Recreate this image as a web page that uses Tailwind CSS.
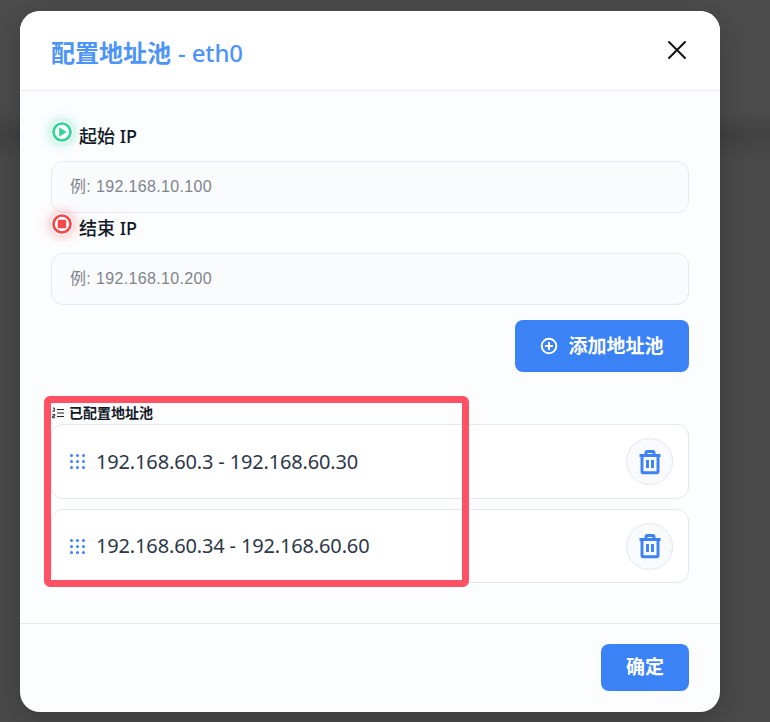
<!DOCTYPE html>
<html lang="zh">
<head>
    <meta charset="UTF-8" />
    <title>配置地址池</title>
    <script src="https://cdn.jsdelivr.net/npm/@tailwindcss/browser@4"></script>
</head>
<body class="m-0 h-[722px] w-[770px] overflow-hidden bg-[#464646] font-['Noto_Sans','Noto_Sans_CJK_SC',sans-serif]">
    <div class="relative h-[722px] w-[770px] bg-[linear-gradient(180deg,#4c4c4c_0,#4c4c4c_110px,#424242_135px,#4a4a4a_160px,#4a4a4a_100%)] pt-[11px] pl-[20px]">

        <!-- Modal -->
        <div class="flex h-[701px] w-[700px] flex-col overflow-hidden rounded-[20px] bg-[#fcfdfe] shadow-[0_8px_32px_rgba(0,0,0,0.22)]">

            <!-- Header -->
            <div class="flex h-[80px] shrink-0 items-center justify-between border-b border-[#e8eaf2] bg-white pr-[33px] pl-[31px]">
                <h2 class="pt-[4px] text-[24px] font-semibold text-[#4d94f8]">配置地址池<span class="ml-[1px] font-medium tracking-[-0.15px]"> - eth0</span></h2>
                <svg class="mb-[2px] h-[20px] w-[20px]" viewBox="0 0 20 20" fill="none" stroke="#111" stroke-width="2" stroke-linecap="round">
                    <path d="M2 2 18 18M18 2 2 18" />
                </svg>
            </div>

            <!-- Body -->
            <div class="flex flex-1 flex-col px-[31px]">
                <div class="flex h-[70px] items-start pt-[29px]">
                    <svg class="mt-[1px] h-[22px] w-[22px] rounded-full shadow-[0_0_10px_3px_rgba(52,211,153,0.3)]" viewBox="0 0 22 22">
                        <circle cx="11" cy="11" r="8.5" fill="none" stroke="#34d399" stroke-width="2.7" />
                        <path d="M8.2 6.2v9.6l7.4-4.8z" fill="#34d399" />
                    </svg>
                    <label class="mt-[4px] ml-[6px] text-[18px] leading-[24px] font-medium text-[#111827]">起始 IP</label>
                </div>
                <input class="h-[52px] w-full rounded-[12px] border border-[#e6e8f0] bg-[#fafbfd] px-[18px] font-['Liberation_Sans','Noto_Sans_CJK_SC',sans-serif] text-[16px] tracking-[0.35px] placeholder:text-[#80848c]" placeholder="例: 192.168.10.100" />

                <div class="flex h-[40px] items-start">
                    <svg class="h-[22px] w-[22px] rounded-full shadow-[0_0_10px_3px_rgba(248,113,113,0.35)]" viewBox="0 0 22 22">
                        <circle cx="11" cy="11" r="8.5" fill="none" stroke="#f24a4a" stroke-width="2.7" />
                        <rect x="6.8" y="6.8" width="8.4" height="8.4" rx="1.2" fill="#f24a4a" />
                    </svg>
                    <label class="mt-[3px] ml-[6px] text-[18px] leading-[24px] font-medium text-[#111827]">结束 IP</label>
                </div>
                <input class="h-[52px] w-full rounded-[12px] border border-[#e6e8f0] bg-[#fafbfd] px-[18px] font-['Liberation_Sans','Noto_Sans_CJK_SC',sans-serif] text-[16px] tracking-[0.35px] placeholder:text-[#80848c]" placeholder="例: 192.168.10.200" />

                <div class="mt-[15px] flex justify-end">
                    <button class="flex h-[52px] w-[174px] items-center justify-center gap-[10px] rounded-[8px] bg-[#3b82f6] text-[19px] font-semibold text-white">
                        <svg class="h-[18px] w-[18px]" viewBox="0 0 18 18" fill="none" stroke="#fff" stroke-width="2" stroke-linecap="round">
                            <circle cx="9" cy="9" r="7.3" />
                            <path d="M9 5.8v6.4M5.8 9h6.4" />
                        </svg>
                        添加地址池
                    </button>
                </div>

                <div class="mt-[31px] mb-[2px] flex h-[19px] items-center gap-[5px] pl-[1px] text-[14px] font-bold text-[#111827]">
                    <svg class="h-[12px] w-[12px]" viewBox="0 0 12 12" fill="none" stroke="#222" stroke-width="1.1">
                        <path d="M5 2.5h7M5 6h7M5 9.5h7" />
                        <path d="M1 1h1.3v3M.4 4h2.6M.6 7.5h2.2v1.6H.6v1.6h2.4" stroke-width="1" />
                    </svg>
                    已配置地址池
                </div>

                <div class="flex flex-col gap-[10px]">
                    <div class="flex h-[75px] items-center justify-between rounded-[12px] border border-[#e3e7f0] bg-white pr-[15px] pl-[18px]">
                        <div class="flex items-center gap-[11px]">
                            <svg class="h-[15px] w-[15px]" viewBox="0 0 15 15" fill="#3b82f6">
                                <circle cx="1.5" cy="1.5" r="1.5" /><circle cx="7.5" cy="1.5" r="1.5" /><circle cx="13.5" cy="1.5" r="1.5" />
                                <circle cx="1.5" cy="7.5" r="1.5" /><circle cx="7.5" cy="7.5" r="1.5" /><circle cx="13.5" cy="7.5" r="1.5" />
                                <circle cx="1.5" cy="13.5" r="1.5" /><circle cx="7.5" cy="13.5" r="1.5" /><circle cx="13.5" cy="13.5" r="1.5" />
                            </svg>
                            <span class="text-[20px] tracking-[-0.15px] text-[#2d3748]">192.168.60.3 - 192.168.60.30</span>
                        </div>
                        <button class="flex h-[47px] w-[47px] items-center justify-center rounded-full border border-[#e3e7f0] bg-[#f8fafc]">
                            <svg class="h-[26px] w-[26px]" viewBox="0 0 26 26" fill="none" stroke="#3b82f6" stroke-width="2.9" stroke-linejoin="round">
                                <path d="M2.5 6.5h21M9 6.5V3.8c0-.7.5-1.3 1.2-1.3h5.6c.7 0 1.2.6 1.2 1.3v2.7M5 6.5v16c0 .8.6 1.3 1.3 1.3h13.4c.7 0 1.3-.5 1.3-1.3v-16M10.5 11v8M15.5 11v8" />
                            </svg>
                        </button>
                    </div>
                    <div class="flex h-[74px] items-center justify-between rounded-[12px] border border-[#e3e7f0] bg-white pr-[15px] pl-[18px]">
                        <div class="flex items-center gap-[11px]">
                            <svg class="h-[15px] w-[15px]" viewBox="0 0 15 15" fill="#3b82f6">
                                <circle cx="1.5" cy="1.5" r="1.5" /><circle cx="7.5" cy="1.5" r="1.5" /><circle cx="13.5" cy="1.5" r="1.5" />
                                <circle cx="1.5" cy="7.5" r="1.5" /><circle cx="7.5" cy="7.5" r="1.5" /><circle cx="13.5" cy="7.5" r="1.5" />
                                <circle cx="1.5" cy="13.5" r="1.5" /><circle cx="7.5" cy="13.5" r="1.5" /><circle cx="13.5" cy="13.5" r="1.5" />
                            </svg>
                            <span class="text-[20px] tracking-[-0.15px] text-[#2d3748]">192.168.60.34 - 192.168.60.60</span>
                        </div>
                        <button class="flex h-[47px] w-[47px] items-center justify-center rounded-full border border-[#e3e7f0] bg-[#f8fafc]">
                            <svg class="h-[26px] w-[26px]" viewBox="0 0 26 26" fill="none" stroke="#3b82f6" stroke-width="2.9" stroke-linejoin="round">
                                <path d="M2.5 6.5h21M9 6.5V3.8c0-.7.5-1.3 1.2-1.3h5.6c.7 0 1.2.6 1.2 1.3v2.7M5 6.5v16c0 .8.6 1.3 1.3 1.3h13.4c.7 0 1.3-.5 1.3-1.3v-16M10.5 11v8M15.5 11v8" />
                            </svg>
                        </button>
                    </div>
                </div>
            </div>

            <!-- Footer -->
            <div class="flex h-[89px] shrink-0 items-start justify-end border-t border-[#e8eaf2] pt-[20px] pr-[31px]">
                <button class="h-[47px] w-[88px] rounded-[8px] bg-[#3b82f6] text-[19px] font-semibold text-white">确定</button>
            </div>
        </div>

        <!-- Red annotation box over the list -->
        <div class="absolute top-[396px] left-[44px] h-[191px] w-[425px] rounded-[6px] border-[7px] border-[#ff5164]"></div>
    </div>
</body>
</html>
